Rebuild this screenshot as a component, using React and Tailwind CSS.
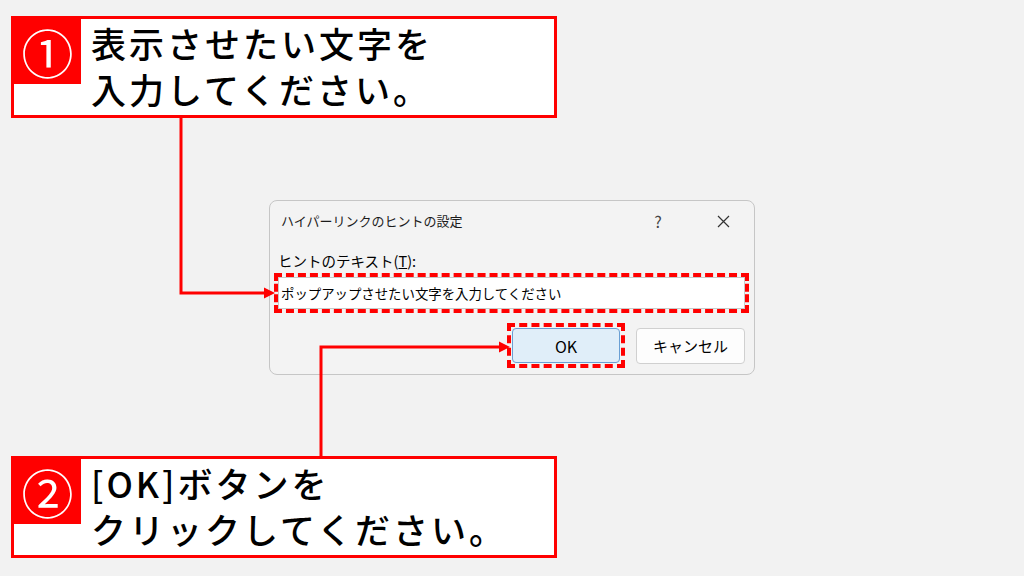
import React from "react";

const jp = { fontFamily: '"Noto Sans CJK JP", "Noto Sans", sans-serif' };

function Callout({ num, lines }) {
  return (
    <div className="w-[546px] h-[102px] border-[3px] border-[#ff0000] bg-white flex">
      <div className="w-[67px] h-[65px] bg-[#ff0000] flex items-center justify-center text-white text-[52px] leading-none">
        {num}
      </div>
      <div className="pl-[10px] pt-[1px] flex flex-col text-[35px] leading-[46px] tracking-[3px] font-medium text-black">
        {lines.map((l) => (
          <div key={l}>{l}</div>
        ))}
      </div>
    </div>
  );
}

function Dialog() {
  return (
    <div className="ml-[258px] mt-[82px] w-[486px] h-[175px] rounded-[8px] border border-[#c6c6c6] bg-[#f3f3f3] flex flex-col text-[14px]">
      <div className="h-[40px] flex items-center pl-[11px] text-[13px] text-[#1b1b1b]">
        <span>ハイパーリンクのヒントの設定</span>
        <div className="ml-auto flex items-center">
          <div className="w-[46px] h-[40px] flex items-center justify-center text-[16px] text-[#444]">?</div>
          <div className="w-[46px] h-[40px] ml-[19px] mr-[8px] flex items-center justify-center">
            <svg width="13" height="13" viewBox="0 0 13 13" stroke="#333" strokeWidth="1.2" fill="none">
              <path d="M1 1L12 12M12 1L1 12" />
            </svg>
          </div>
        </div>
      </div>
      <div className="pt-[10px] pb-[6px] flex flex-col">
        <div className="pl-[8px] leading-[20px] text-[14.5px] text-black">
          ヒントのテキスト(<span className="underline">T</span>):
        </div>
        <div className="ml-[4px] mt-[2px] w-[475px] h-[40px] border-4 border-dashed border-[#ff0000]">
          <div className="h-full bg-white border border-[#c9c9c9] flex items-center pl-[2px] text-[13.4px] text-black">
            ポップアップさせたい文字を入力してください
          </div>
        </div>
        <div className="mt-[10px] flex justify-end pr-[9px]">
          <div className="w-[118px] h-[45px] border-4 border-dashed border-[#ff0000] p-[1px]">
            <div className="h-full rounded-[4px] border border-[#6a9fd4] bg-[#e0eef9] flex items-center justify-center text-[16px] text-black">
              OK
            </div>
          </div>
          <div className="ml-[11px] mt-[5px] w-[109px] h-[36px] rounded-[4px] border border-[#d0d0d0] bg-[#fdfdfd] flex items-center justify-center text-[15px] text-black">
            キャンセル
          </div>
        </div>
      </div>
    </div>
  );
}

export default function App() {
  return (
    <div className="relative w-[1024px] h-[576px] overflow-hidden bg-[#f2f2f2] pt-[16px] pl-[11px]" style={jp}>
      <Callout num="①" lines={["表示させたい文字を", "入力してください。"]} />
      <Dialog />
      <div className="mt-[81px]">
        <Callout num="②" lines={["[OK]ボタンを", "クリックしてください。"]} />
      </div>
      <svg className="absolute inset-0 pointer-events-none" width="1024" height="576">
        <g stroke="#ff0000" strokeWidth="3" fill="none">
          <path d="M181 118V293H265" />
          <path d="M321 456V347H500" />
        </g>
        <g fill="#ff0000">
          <polygon points="264,287.5 275,293 264,298.5" />
          <polygon points="499,341.5 510,347 499,352.5" />
        </g>
      </svg>
    </div>
  );
}
